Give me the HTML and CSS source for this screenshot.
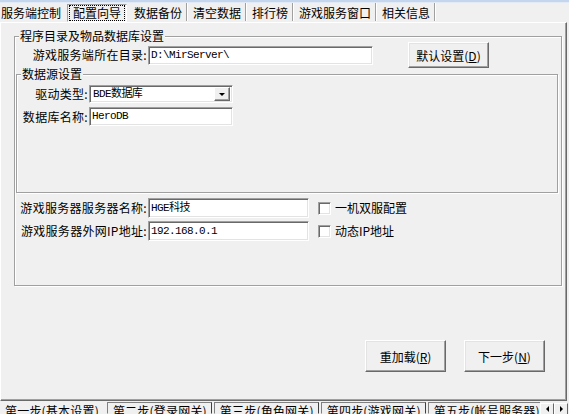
FILE: index.html
```html
<!DOCTYPE html>
<html lang="zh-CN">
<head>
  <meta charset="UTF-8" />
  <title>配置向导</title>
  <link rel="stylesheet" href="styles.css">
</head>
<body>
  <div class="window-edge"></div>

  <div class="top-tabs">
    <span class="top-tab first">服务端控制</span>
    <span class="top-tab active"><span class="focus">配置向导</span></span>
    <span class="top-tab">数据备份</span>
    <span class="top-tab">清空数据</span>
    <span class="top-tab">排行榜</span>
    <span class="top-tab">游戏服务窗口</span>
    <span class="top-tab">相关信息</span>
  </div>

  <div class="sheet">
    <fieldset class="group group-main">
      <legend>程序目录及物品数据库设置</legend>

      <div class="row row-dir">
        <label class="lbl lbl-wide">游戏服务端所在目录:</label>
        <div class="edit edit-dir">D:\MirServer\</div>
        <button class="btn btn-default">默认设置(<u>D</u>)</button>
      </div>

      <fieldset class="group group-db">
        <legend>数据源设置</legend>
        <div class="row row-driver">
          <label class="lbl lbl-narrow">驱动类型:</label>
          <div class="combo">
            <span class="combo-text">BDE数据库</span>
            <span class="combo-btn"><span class="arrow-down"></span></span>
          </div>
        </div>
        <div class="row row-dbname">
          <label class="lbl lbl-narrow">数据库名称:</label>
          <div class="edit edit-db">HeroDB</div>
        </div>
      </fieldset>

      <div class="row row-server">
        <label class="lbl lbl-wide">游戏服务器服务器名称:</label>
        <div class="edit edit-server">HGE科技</div>
        <span class="check"></span>
        <span class="check-text">一机双服配置</span>
      </div>
      <div class="row row-ip">
        <label class="lbl lbl-wide">游戏服务器外网IP地址:</label>
        <div class="edit edit-server">192.168.0.1</div>
        <span class="check"></span>
        <span class="check-text">动态IP地址</span>
      </div>
    </fieldset>

    <div class="actions">
      <button class="btn btn-big">重加载(<u>R</u>)</button>
      <button class="btn btn-big">下一步(<u>N</u>)</button>
    </div>
  </div>

  <div class="bottom-tabs">
    <div class="bottom-strip">
      <span class="btab active">第一步(基本设置)</span>
      <span class="btab">第二步(登录网关)</span>
      <span class="btab">第三步(角色网关)</span>
      <span class="btab">第四步(游戏网关)</span>
      <span class="btab">第五步(帐号服务器)</span>
    </div>
    <span class="scroll-btn"><span class="arrow-left"></span></span>
    <span class="scroll-btn"><span class="arrow-right"></span></span>
  </div>
</body>
</html>
```

FILE: styles.css
```css
html, body {
  margin: 0;
  padding: 0;
}

body {
  width: 569px;
  height: 414px;
  overflow: hidden;
  background: #f0f0f0;
  font-family: "Noto Sans CJK SC", "Liberation Sans", sans-serif;
  font-size: 12px;
  color: #000;
}

/* window frame strip */
.window-edge {
  height: 2px;
  background: #c3d6ee;
  border-bottom: 1px solid #e2eaf5;
}

/* top page control tabs */
.top-tabs {
  display: flex;
  align-items: flex-start;
  height: 19px;
}
.top-tab {
  line-height: 17px;
  padding: 1px 4px 0 5px;
  border-right: 1px solid #a0a0a0;
  box-shadow: 1px 0 0 #fff;
  margin-right: 1px;
  white-space: nowrap;
}
.top-tab.first {
  padding-left: 1px;
  padding-right: 5px;
  border-right: none;
  box-shadow: none;
}
.top-tab.active {
  height: 16px;
  margin-top: 1px;
  padding: 0 2px;
  border: 1px solid;
  border-color: #a0a0a0 #fff #fff #a0a0a0;
  box-shadow: none;
  margin-right: 2px;
}
.top-tab.active .focus {
  display: block;
  line-height: 12px;
  padding: 1px 3px;
  margin-top: 1px;
  outline: 1px dotted #000;
  outline-offset: 0;
}

/* tab sheet */
.sheet {
  width: 567px;
  height: 379px;
  box-sizing: border-box;
  border: 1px solid;
  border-color: #fff #696969 #696969 #fff;
  box-shadow: inset -1px -1px 0 #a0a0a0;
  padding: 6px 0 0 13px;
}

/* group boxes */
.group {
  margin: 0;
  padding: 0;
  min-width: 0;
  box-sizing: border-box;
  border: 1px solid #a0a0a0;
  box-shadow: inset 1px 1px 0 #fff, 1px 1px 0 #fff;
}
.group legend {
  line-height: 14px;
  padding: 0 1px;
  margin-left: 4px;
  background: #f0f0f0;
  white-space: nowrap;
}
.group-main {
  width: 548px;
  padding-bottom: 44px;
}
.group-db {
  width: 542px;
  margin: -1px 0 0 1px;
  padding-bottom: 66px;
}

/* rows */
.row {
  display: flex;
  align-items: center;
}
.row-dir {
  margin-top: -1px;
}
.row-driver {
  margin-top: 4px;
}
.row-dbname {
  margin-top: 4px;
}
.row-server {
  margin-top: 5px;
}
.row-ip {
  margin-top: 3px;
}

.lbl {
  text-align: right;
  white-space: nowrap;
  line-height: 14px;
  letter-spacing: 0.3px;
}
.lbl-wide {
  width: 132px;
}
.lbl-narrow {
  width: 71px;
}

/* edits */
.edit {
  box-sizing: border-box;
  height: 19px;
  margin-left: 1px;
  padding: 0 2px;
  background: #fff;
  border: 1px solid;
  border-color: #a0a0a0 #fff #fff #a0a0a0;
  box-shadow: inset 1px 1px 0 #696969, inset -1px -1px 0 #e3e3e3;
  font-family: "Liberation Mono", "Noto Sans CJK SC", monospace;
  font-size: 11px;
  letter-spacing: -0.6px;
  line-height: 17px;
  white-space: nowrap;
  overflow: hidden;
}
.edit-dir {
  width: 225px;
}
.edit-db {
  width: 144px;
}
.edit-server {
  width: 161px;
  height: 20px;
  line-height: 18px;
}

/* combo box */
.combo {
  box-sizing: border-box;
  width: 144px;
  height: 18px;
  margin-left: 1px;
  display: flex;
  align-items: center;
  justify-content: space-between;
  background: #fff;
  border: 1px solid;
  border-color: #a0a0a0 #fff #fff #a0a0a0;
  box-shadow: inset 1px 1px 0 #696969, inset -1px -1px 0 #e3e3e3;
  padding: 1px 2px;
}
.combo-text {
  font-family: "Liberation Mono", "Noto Sans CJK SC", monospace;
  font-size: 11px;
  letter-spacing: -0.6px;
  line-height: 14px;
  padding-left: 1px;
}
.combo-btn {
  box-sizing: border-box;
  width: 16px;
  height: 14px;
  display: flex;
  align-items: center;
  justify-content: center;
  background: #f0f0f0;
  border: 1px solid;
  border-color: #fff #696969 #696969 #fff;
  box-shadow: inset -1px -1px 0 #a0a0a0;
}
.arrow-down {
  width: 0;
  height: 0;
  border-left: 3px solid transparent;
  border-right: 3px solid transparent;
  border-top: 3px solid #000;
}

/* buttons */
.btn {
  box-sizing: border-box;
  padding: 0;
  background: #f0f0f0;
  border: 1px solid;
  border-color: #fff #696969 #696969 #fff;
  box-shadow: inset -1px -1px 0 #a0a0a0, inset 1px 1px 0 #e3e3e3;
  font-family: "Noto Sans CJK SC", "Liberation Sans", sans-serif;
  font-size: 12px;
  color: #000;
}
.btn-default {
  width: 81px;
  height: 26px;
  margin-left: 35px;
}
.btn-big {
  width: 81px;
  height: 32px;
}

/* checkboxes */
.check {
  box-sizing: border-box;
  width: 13px;
  height: 13px;
  margin-left: 9px;
  background: #fff;
  border: 1px solid;
  border-color: #a0a0a0 #fff #fff #a0a0a0;
  box-shadow: inset 1px 1px 0 #696969, inset -1px -1px 0 #e3e3e3;
}
.check-text {
  margin-left: 4px;
  line-height: 14px;
  white-space: nowrap;
}

/* bottom action buttons */
.actions {
  display: flex;
  justify-content: flex-end;
  gap: 18px;
  margin-top: 54px;
  padding-right: 21px;
}

/* bottom step tabs */
.bottom-tabs {
  display: flex;
  height: 13px;
  overflow: hidden;
}
.bottom-strip {
  display: flex;
  width: 540px;
  overflow: hidden;
}
.btab {
  flex: none;
  line-height: 16px;
  padding: 0 4px 0 5px;
  margin-left: 2px;
  margin-top: 1px;
  border: 1px solid;
  border-color: #808080 #404040 transparent #808080;
  white-space: nowrap;
  letter-spacing: 0.2px;
}
.btab.active {
  margin: 0;
  padding: 1px 5px 0 4px;
  border-color: transparent;
}
.scroll-btn {
  box-sizing: border-box;
  flex: none;
  width: 14px;
  height: 12px;
  margin-top: 2px;
  display: flex;
  align-items: center;
  justify-content: center;
  background: #f0f0f0;
  border: 1px solid;
  border-color: #fff #696969 #696969 #fff;
}
.arrow-left {
  width: 0;
  height: 0;
  border-top: 3px solid transparent;
  border-bottom: 3px solid transparent;
  border-right: 3px solid #000;
}
.arrow-right {
  width: 0;
  height: 0;
  border-top: 3px solid transparent;
  border-bottom: 3px solid transparent;
  border-left: 3px solid #000;
}
```
